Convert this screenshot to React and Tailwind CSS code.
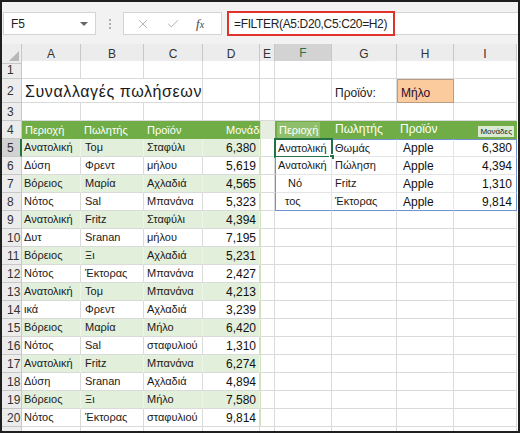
import { X, Check } from "lucide-react";

const font = { fontFamily: '"Liberation Sans", Arial, sans-serif' };

const sales = [
  ["Ανατολική", "Τομ", "Σταφύλι", "6,380"],
  ["Δύση", "Φρεντ", "μήλου", "5,619"],
  ["Βόρειος", "Μαρία", "Αχλαδιά", "4,565"],
  ["Νότος", "Sal", "Μπανάνα", "5,323"],
  ["Ανατολική", "Fritz", "Σταφύλι", "4,394"],
  ["Δυτ", "Sranan", "μήλου", "7,195"],
  ["Βόρειος", "Ξι", "Αχλαδιά", "5,231"],
  ["Νότος", "Έκτορας", "Μπανάνα", "2,427"],
  ["Ανατολική", "Τομ", "Μπανάνα", "4,213"],
  ["ικά", "Φρεντ", "Αχλαδιά", "3,239"],
  ["Βόρειος", "Μαρία", "Μήλο", "6,420"],
  ["Νότος", "Sal", "σταφυλιού", "1,310"],
  ["Ανατολική", "Fritz", "Μπανάνα", "6,274"],
  ["Δύση", "Sranan", "Αχλαδιά", "4,894"],
  ["Βόρειος", "Ξι", "Μήλο", "7,580"],
  ["Νότος", "Έκτορας", "σταφυλιού", "9,814"],
];

const filtered = [
  ["Ανατολική", "Θωμάς", "Apple", "6,380", ""],
  ["Ανατολική", "Πώληση", "Apple", "4,394", ""],
  ["Νό", "Fritz", "Apple", "1,310", "pl-[12px]"],
  ["τος", "Έκτορας", "Apple", "9,814", "pl-[9px]"],
];

const cell =
  "border-r border-b border-[#dadada] flex items-center px-[3px] overflow-hidden whitespace-nowrap text-[11px] text-[#1a1a1a]";

function RowHead({ n, active }) {
  return (
    <div
      className={
        "border-r border-b border-[#c8c8c8] flex items-center pl-[5px] text-[12px] text-[#333] " +
        (active ? "bg-[#d2d2d2] border-r-2 border-r-[#217346]" : "bg-[#ececec]")
      }>
      {n}
    </div>
  );
}

function Empty() {
  return <div className={cell + " bg-white"} />;
}

export default function App() {
  const rows = [];

  // row 1
  rows.push(<RowHead key="h1" n={1} />);
  for (let i = 0; i < 9; i++) rows.push(<Empty key={"r1" + i} />);

  // row 2
  rows.push(<RowHead key="h2" n={2} />);
  rows.push(
    <div key="title" className={cell + " col-span-3 bg-white text-[16px] tracking-[0.6px] pl-[3px] pt-[2px]"}>
      Συναλλαγές πωλήσεων
    </div>
  );
  rows.push(<Empty key="r2d" />);
  rows.push(<Empty key="r2e" />);
  rows.push(<Empty key="r2f" />);
  rows.push(
    <div key="r2g" className={cell + " bg-white text-[12px] pt-[4px]"}>
      Προϊόν:
    </div>
  );
  rows.push(
    <div key="r2h" className="bg-[#fccb9d] border border-[#b89c83] flex items-center px-[3px] pt-[4px] text-[12px] text-[#2a0a2a]">
      Μήλο
    </div>
  );
  rows.push(<Empty key="r2i" />);

  // row 3
  rows.push(<RowHead key="h3" n={3} />);
  for (let i = 0; i < 9; i++) rows.push(<Empty key={"r3" + i} />);

  // row 4 - headers
  rows.push(<RowHead key="h4" n={4} />);
  ["Περιοχή", "Πωλητής", "Προϊόν"].forEach((t) =>
    rows.push(
      <div key={"lh" + t} className="bg-[#70ad47] flex items-end pb-[1px] px-[3px] text-[11px] text-white whitespace-nowrap overflow-hidden">
        {t}
      </div>
    )
  );
  rows.push(
    <div key="lhd" className="bg-[#70ad47] flex items-end justify-start pb-[1px] pl-[23px] text-[11px] text-white whitespace-nowrap overflow-hidden">
      Μονάδες
    </div>
  );
  rows.push(<div key="r4e" className="bg-[#e6eedf] border-l border-[#cfe3c0]" />);
  rows.push(
    <div key="fh1" className="bg-[#70ad47] flex items-end pb-[1px] pl-[2px] whitespace-nowrap overflow-hidden">
      <span className="bg-[#8fbf6c] px-[2px] text-[11px] text-white">Περιοχή</span>
    </div>
  );
  ["Πωλητής", "Προϊόν"].forEach((t) =>
    rows.push(
      <div key={"fh" + t} className="bg-[#70ad47] flex items-end pb-[1px] px-[3px] text-[12px] text-white whitespace-nowrap overflow-hidden">
        {t}
      </div>
    )
  );
  rows.push(
    <div key="fh4" className="bg-[#70ad47] flex items-end justify-end pb-[2px] pr-[3px]">
      <span className="bg-[#dce9d2] px-[2px] text-[8px] leading-[11px] text-[#1a1a1a]">Μονάδες</span>
    </div>
  );

  // rows 5-20
  sales.forEach((s, i) => {
    const n = i + 5;
    const green = i % 2 === 0;
    const bg = green ? "bg-[#e2efda] border-r-[#eef5e8]" : "bg-white";
    rows.push(<RowHead key={"h" + n} n={n} active={n === 5} />);
    rows.push(
      <div key={"a" + n} className={cell + " " + bg + " pl-[2px]"}>
        {s[0]}
      </div>
    );
    rows.push(
      <div key={"b" + n} className={cell + " " + bg + " pl-[4px]"}>
        {s[1]}
      </div>
    );
    rows.push(
      <div key={"c" + n} className={cell + " " + bg}>
        {s[2]}
      </div>
    );
    rows.push(
      <div key={"d" + n} className={cell + " " + bg + " justify-end text-[12px] text-[#111]"}>
        {s[3]}
      </div>
    );
    rows.push(<div key={"e" + n} className="border-b border-r border-[#dadada] border-l border-l-[#cfe3c0] bg-white" />);

    const f = filtered[i];
    if (f) {
      const top = i === 0 ? " border-t border-t-[#6f93cf]" : "";
      const bottom = i === 3 ? " border-b-[#6f93cf]" : "";
      rows.push(
        <div key={"f" + n} className={"relative bg-white flex items-center whitespace-nowrap text-[11px] text-[#1a1a1a] border-b border-r border-[#e4e4e4] border-l border-l-[#6f93cf] px-[2px] " + (f[4] || "") + top + bottom}>
          {f[0]}
          {n === 5 && (
            <div className="absolute inset-[-2px] border-2 border-[#217346]">
              <div className="absolute right-[-4px] bottom-[-4px] w-[6px] h-[6px] bg-[#217346] border border-white" />
            </div>
          )}
        </div>
      );
      rows.push(
        <div key={"g" + n} className={"bg-white flex items-center px-[3px] whitespace-nowrap text-[11px] text-[#1a1a1a] border-b border-r border-[#e4e4e4]" + top + bottom}>
          {f[1]}
        </div>
      );
      rows.push(
        <div key={"hh" + n} className={"bg-white flex items-center px-[6px] whitespace-nowrap text-[12px] text-[#111] border-b border-r border-[#e4e4e4]" + top + bottom}>
          {f[2]}
        </div>
      );
      rows.push(
        <div key={"i" + n} className={"bg-white flex items-center justify-end px-[4px] whitespace-nowrap text-[12px] text-[#111] border-b border-[#e4e4e4] border-r border-r-[#6f93cf]" + top + bottom}>
          {f[3]}
        </div>
      );
    } else {
      for (let j = 0; j < 4; j++) rows.push(<Empty key={"x" + n + j} />);
    }
  });

  // row 21 (partial, number hidden below the frame)
  rows.push(<RowHead key="h21" n="" />);
  for (let i = 0; i < 9; i++) rows.push(<Empty key={"r21" + i} />);

  return (
    <div style={font} className="w-[520px] h-[433px] overflow-hidden border-2 border-[#1f1f1f] bg-[#f2f2f2] flex flex-col">
      {/* FORMULA BAR */}
      <div className="flex items-center h-[42px] pt-[1px] shrink-0">
        <div className="ml-[1px] w-[93px] h-[23px] bg-white border border-[#d4d4d4] flex items-center justify-between px-[7px]">
          <span className="text-[12px] text-[#222]">F5</span>
          <span className="w-0 h-0 border-l-[4px] border-r-[4px] border-t-[4px] border-l-transparent border-r-transparent border-t-[#666]" />
        </div>
        <div className="w-[27px] flex flex-col items-center gap-[2px]">
          <span className="w-[2px] h-[2px] bg-[#b0b0b0]" />
          <span className="w-[2px] h-[2px] bg-[#b0b0b0]" />
          <span className="w-[2px] h-[2px] bg-[#b0b0b0]" />
        </div>
        <div className="w-[99px] h-[23px] bg-white border border-[#d4d4d4] flex items-center pl-[12px] gap-[16px]">
          <X size={14} strokeWidth={1.5} className="text-[#a8a8a8]" />
          <Check size={14} strokeWidth={1.5} className="text-[#a8a8a8]" />
          <span className="text-[13px] italic text-[#444]" style={{ fontFamily: '"Liberation Serif", serif' }}>
            f<span className="text-[10px]">x</span>
          </span>
        </div>
        <div className="ml-[5px] flex-1 h-[23px] bg-white border-y border-[#d4d4d4] flex items-center">
          <div className="w-[168px] h-[25px] border-[2px] border-[#e0312b] flex items-center pl-[5px] text-[12px] tracking-[-0.35px] text-[#222] whitespace-nowrap">
            =FILTER(A5:D20,C5:C20=H2)
          </div>
        </div>
      </div>

      {/* GRID */}
      <div className="flex-1 overflow-hidden bg-white">
        {/* column headers */}
        <div className="grid grid-cols-[20px_59px_63px_59px_57px_15px_57px_65px_57px_63px] h-[17px]">
          <div className="bg-[#ececec] border-r border-b border-[#c8c8c8] relative">
            <span
              className="absolute right-[2px] bottom-[2px] w-0 h-0"
              style={{ borderBottom: "10px solid #b8b8b8", borderLeft: "10px solid transparent" }}
            />
          </div>
          {["A", "B", "C", "D", "E", "F", "G", "H", "I"].map((c) => (
            <div
              key={c}
              className={
                "border-r border-b flex items-center justify-center text-[12px] text-[#333] " +
                (c === "F"
                  ? "bg-[#d3d3d3] border-b-2 border-b-[#217346] border-r-[#c8c8c8] text-[#217346]"
                  : "bg-[#ececec] border-[#c8c8c8]")
              }>
              {c}
            </div>
          ))}
        </div>
        <div className="grid grid-cols-[20px_59px_63px_59px_57px_15px_57px_65px_57px_63px] grid-rows-[18px_24px_18px_repeat(18,18px)]">
          {rows}
        </div>
      </div>
    </div>
  );
}
